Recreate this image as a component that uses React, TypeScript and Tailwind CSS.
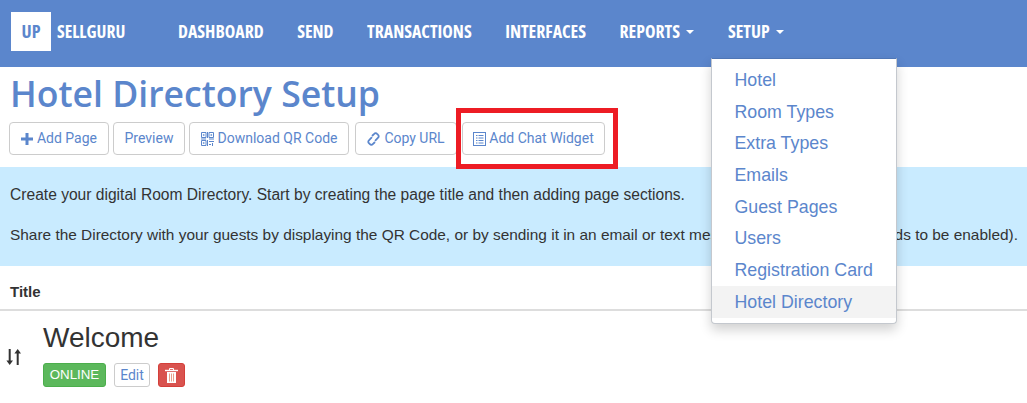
import React from 'react';

const navItems = [
  { label: 'DASHBOARD', caret: false },
  { label: 'SEND', caret: false },
  { label: 'TRANSACTIONS', caret: false },
  { label: 'INTERFACES', caret: false },
  { label: 'REPORTS', caret: true },
  { label: 'SETUP', caret: true },
];

const menuItems = ['Hotel', 'Room Types', 'Extra Types', 'Emails', 'Guest Pages', 'Users', 'Registration Card', 'Hotel Directory'];

const NavText: React.FC<{ children: React.ReactNode; className?: string }> = ({ children, className }) => (
  <span className={`font-['Open_Sans',sans-serif] font-bold [font-stretch:75%] ${className ?? ''}`}>{children}</span>
);

const ToolButton: React.FC<{ icon?: React.ReactNode; label: string; className?: string }> = ({ icon, label, className }) => (
  <button className={`h-[33px] flex items-center justify-center gap-[4px] border border-[#ccc] rounded-[4px] bg-white text-[#5b86cc] text-[14px] font-['Roboto',sans-serif] ${className ?? ''}`}>
    {icon}
    <span>{label}</span>
  </button>
);

const PlusIcon = () => (
  <svg width="12" height="12" viewBox="0 0 12 12" fill="#5b86cc">
    <path d="M4.5 0h3v4.5H12v3H7.5V12h-3V7.5H0v-3h4.5z" />
  </svg>
);

const QrIcon = () => (
  <svg width="13" height="14" viewBox="0 0 13 14" fill="none" stroke="#5b86cc" strokeWidth="1">
    <path d="M.5.5h4.5v5H.5zM8 .5h4.5v5H8zM.5 8.500h4.500v5H.5z" />
    <path d="M2.200 2.500h1v1h-1zM9.800 2.500h1v1h-1zM2.200 10.500h1v1h-1z" fill="#5b86cc" strokeWidth="0.500" />
    <path d="M0 7h5M8 7h5M6.500 0v6M6.500 8v6M8 9.500h5M8 12.500h2M11.500 11v3" />
  </svg>
);

const LinkIcon = () => (
  <svg width="13" height="14" viewBox="0 0 13 14" fill="none" stroke="#5b86cc" strokeWidth="1.800" strokeLinecap="round">
    <path d="M5.500 3.500 7.200 1.800a2 2 0 0 1 2.900 0l1 1a2 2 0 0 1 0 2.900L8.500 8.300" />
    <path d="M7.500 10.500 5.800 12.200a2 2 0 0 1-2.900 0l-1-1a2 2 0 0 1 0-2.900L4.500 5.700" />
  </svg>
);

const ListIcon = () => (
  <svg width="13" height="14" viewBox="0 0 13 14" fill="none" stroke="#5b86cc" strokeWidth="1">
    <rect x="0.500" y="0.500" width="12" height="13" />
    <path d="M3 3.500h1.500M3 6h1.500M3 8.500h1.500M3 11h1.500M5.500 3.500H10.500M5.500 6H10.500M5.500 8.500H10.500M5.500 11H10.500" strokeWidth="1.200" />
  </svg>
);

const TrashIcon = () => (
  <svg width="13" height="15" viewBox="0 0 13 15" fill="none">
    <path d="M4.500 2V.5h4V2" stroke="#fff" strokeWidth="1" />
    <path d="M0 2.500h13" stroke="#fff" strokeWidth="1.400" />
    <path d="M2 4h9v11H2z" fill="#fff" />
    <path d="M4.500 5.500v8M6.500 5.500v8M8.500 5.500v8" stroke="#e8a08c" strokeWidth="1" />
  </svg>
);

const SortIcon = () => (
  <svg width="16" height="16" viewBox="0 0 16 16" fill="#333">
    <path d="M2.700 0h2v11.500H7L3.700 16 .4 11.500h2.300z" />
    <path d="M10.700 16h2V4.500H15L11.700 0 8.400 4.500h2.300z" />
  </svg>
);

export default function App() {
  return (
    <div className="relative h-[403px] w-[1027px] overflow-hidden bg-white font-['Liberation_Sans',sans-serif] text-[#333]">
      <nav className="h-[67px] bg-[#5b86cc] flex items-center pl-[11px]">
        <div className="w-[40px] h-[39px] bg-white flex items-center justify-center mb-[4px]">
          <NavText className="text-[#5b86cc] text-[18px]">UP</NavText>
        </div>
        <NavText className="text-white text-[17.6px] ml-[6px] w-[121px] mb-[5px]">SELLGURU</NavText>
        <div className="flex gap-[33.5px] mb-[5px]">
          {navItems.map(item => (
            <div key={item.label} className="flex items-center gap-[6.5px]">
              <NavText className="text-white text-[17.8px]">{item.label}</NavText>
              {item.caret && <span className="w-0 h-0 mt-[2px] border-x-[4px] border-x-transparent border-t-[4px] border-t-white" />}
            </div>
          ))}
        </div>
      </nav>

      <h1 className="h-[55px] pl-[10px] pt-[1px] text-[35.6px] leading-[50px] font-semibold text-[#5b86cc] font-['Open_Sans',sans-serif]">
        Hotel Directory Setup
      </h1>

      <div className="flex items-center pl-[9px] h-[33px]">
        <ToolButton icon={<PlusIcon />} label="Add Page" className="w-[100px]" />
        <ToolButton label="Preview" className="w-[72px] ml-[4px]" />
        <ToolButton icon={<QrIcon />} label="Download QR Code" className="w-[160px] ml-[4px]" />
        <ToolButton icon={<LinkIcon />} label="Copy URL" className="w-[102px] ml-[6px]" />
        <ToolButton icon={<ListIcon />} label="Add Chat Widget" className="w-[143px] ml-[5px] !gap-[3px]" />
      </div>

      <div className="mt-[12px] h-[99px] bg-[#c9ebff] pl-[10px] pt-[18px] leading-[20px] text-[#333]">
        <p className="text-[15.6px]">Create your digital Room Directory. Start by creating the page title and then adding page sections.</p>
        <p className="mt-[20px] whitespace-nowrap text-[15.42px]">Share the Directory with your guests by displaying the QR Code, or by sending it in an email or text message (text messaging needs to be enabled).</p>
      </div>

      <div className="h-[45px] border-b-2 border-[#ddd] pl-[10px] pt-[16px] text-[15px] leading-[20px] font-bold">Title</div>

      <div className="flex">
        <div className="w-[43px] pl-[6px] pt-[38px]">
          <SortIcon />
        </div>
        <div>
          <div className="mt-[11px] text-[28px] leading-[32px]">Welcome</div>
          <div className="mt-[9px] flex items-center gap-[8px]">
            <span className="h-[24px] w-[63px] flex items-center justify-center rounded-[3px] bg-[#5cb85c] border border-[#4cae4c] text-white text-[13.3px]">ONLINE</span>
            <button className="h-[24px] w-[36px] flex items-center justify-center rounded-[3px] border border-[#ccc] text-[#5b86cc] text-[14px] font-['Roboto',sans-serif]">Edit</button>
            <button className="h-[24px] w-[27px] flex items-center justify-center rounded-[3px] bg-[#d9534f] border border-[#d43f3a]">
              <TrashIcon />
            </button>
          </div>
        </div>
      </div>

      {/* highlight drawn over the screenshot */}
      <div className="absolute left-[456px] top-[108px] w-[162px] h-[61px] border-[5px] border-[#ed1c24]" />

      <div className="absolute left-[711px] top-[58px] w-[186px] h-[266px] bg-white border border-[#c4c8ce] border-t-[#4f76b5] rounded-b-[4px] shadow-[0_6px_12px_rgba(0,0,0,0.18)] pt-[5.5px]">
        {menuItems.map(item => (
          <div key={item} className={`h-[31.7px] pl-[22.5px] flex items-center text-[17.8px] text-[#5b86cc] ${item === 'Hotel Directory' ? 'bg-[#f3f3f3]' : ''}`}>
            {item}
          </div>
        ))}
      </div>
    </div>
  );
}
